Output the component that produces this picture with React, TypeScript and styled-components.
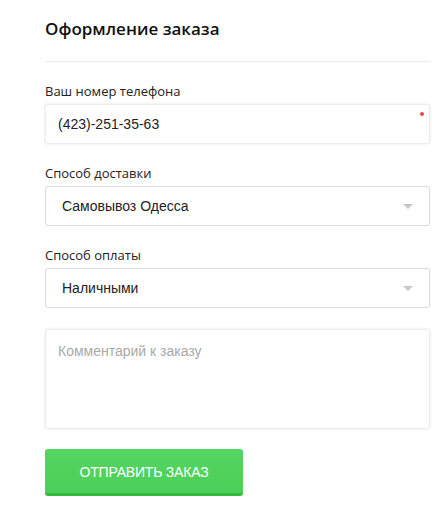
import React from "react";
import styled, { createGlobalStyle } from "styled-components";

const Global = createGlobalStyle`
  html, body { margin: 0; padding: 0; background: #fff; }
  body { font-family: "Open Sans", "Liberation Sans", sans-serif; }
  * { box-sizing: border-box; }
`;

const Page = styled.div`
  width: 446px;
  padding: 0 16px 0 45px;
`;

const Title = styled.h2`
  margin: 0;
  padding-top: 17px;
  height: 62px;
  font-family: "Open Sans", sans-serif;
  font-weight: 600;
  font-size: 17px;
  line-height: 24px;
  color: #111;
  border-bottom: 1px solid #ececec;
`;

const Form = styled.form`
  display: flex;
  flex-direction: column;
  padding-top: 20px;
`;

const Group = styled.div`
  display: flex;
  flex-direction: column;
  gap: 4px;
  margin-bottom: 20px;
`;

const Label = styled.label`
  font-family: "Open Sans", sans-serif;
  font-size: 13px;
  line-height: 18px;
  height: 18px;
  color: #222;
`;

const FieldBox = styled.div<{ $select?: boolean }>`
  position: relative;
  height: 40px;
  display: flex;
  align-items: center;
  padding-left: ${(p) => (p.$select ? "16px" : "12px")};
  border: 1px solid ${(p) => (p.$select ? "#dcdcdc" : "#ededed")};
  border-radius: 3px;
  box-shadow: ${(p) => (p.$select ? "0 0 2px rgba(0,0,0,0.06)" : "0 0 3px rgba(0,0,0,0.1)")};
  font-family: "Liberation Sans", Arial, sans-serif;
  font-size: 14px;
  color: #222;
  background: #fff;
`;

const Required = styled.span`
  position: absolute;
  top: 7px;
  right: 5px;
  width: 4px;
  height: 4px;
  border-radius: 50%;
  background: #f04545;
`;

const Arrow = styled.span`
  position: absolute;
  right: 16px;
  top: 17px;
  width: 0;
  height: 0;
  border-left: 5px solid transparent;
  border-right: 5px solid transparent;
  border-top: 5px solid #c8c8c8;
`;

const Comment = styled.div`
  height: 100px;
  margin-top: 1px;
  margin-bottom: 20px;
  padding: 12px 12px;
  border: 1px solid #ededed;
  border-radius: 3px;
  box-shadow: 0 0 3px rgba(0, 0, 0, 0.1);
  font-family: "Liberation Sans", Arial, sans-serif;
  font-size: 14px;
  line-height: 18px;
  color: #a9a9a9;
`;

const Submit = styled.button`
  width: 198px;
  height: 47px;
  border: none;
  border-bottom: 3px solid #36b840;
  border-radius: 3px;
  background: linear-gradient(#55d562, #4ccf58);
  color: #fff;
  font-family: "Liberation Sans", Arial, sans-serif;
  font-size: 14px;
  letter-spacing: -0.2px;
  text-transform: uppercase;
  padding: 2px 0 0;
  cursor: pointer;
`;

export default function App() {
  return (
    <Page>
      <Global />
      <Title>Оформление заказа</Title>
      <Form onSubmit={(e) => e.preventDefault()}>
        <Group>
          <Label>Ваш номер телефона</Label>
          <FieldBox>
            (423)-251-35-63
            <Required />
          </FieldBox>
        </Group>
        <Group>
          <Label>Способ доставки</Label>
          <FieldBox $select>
            Самовывоз Одесса
            <Arrow />
          </FieldBox>
        </Group>
        <Group>
          <Label>Способ оплаты</Label>
          <FieldBox $select>
            Наличными
            <Arrow />
          </FieldBox>
        </Group>
        <Comment>Комментарий к заказу</Comment>
        <div>
          <Submit type="submit">Отправить заказ</Submit>
        </div>
      </Form>
    </Page>
  );
}
